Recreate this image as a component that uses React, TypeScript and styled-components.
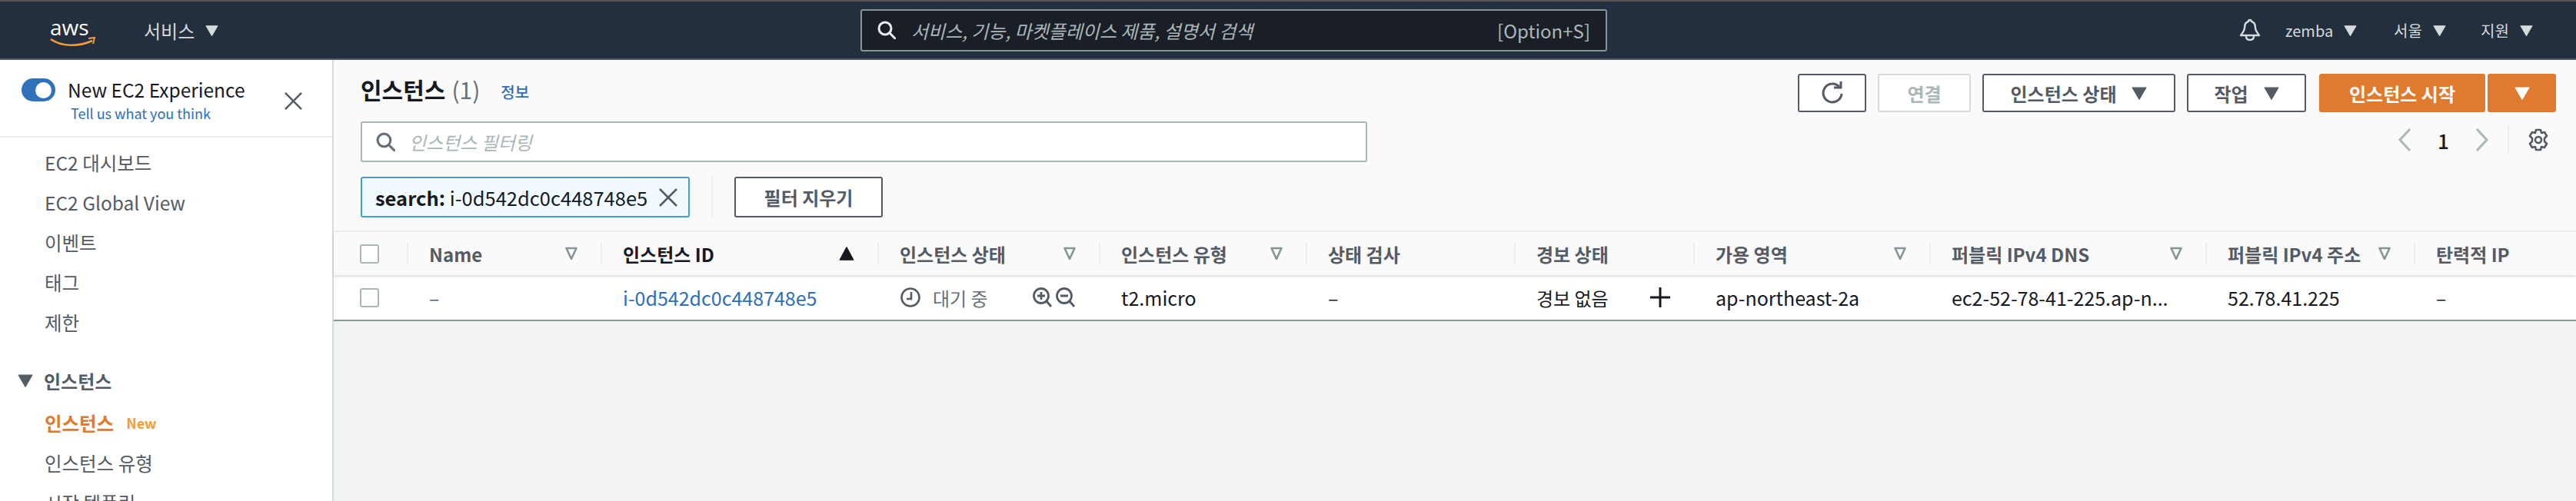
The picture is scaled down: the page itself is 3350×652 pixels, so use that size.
import styled, { createGlobalStyle } from "styled-components"

const GlobalStyle = createGlobalStyle`
    html, body {
        margin: 0;
        padding: 0;
        background: #f2f3f3;
    }
    * {
        box-sizing: border-box;
    }
    body {
        font-family: "Noto Sans CJK KR", "Noto Sans", sans-serif;
        color: #545b64;
    }
`;

const Triangle = ({ size = 17, color = "#d5dbdb", down = true }: { size?: number; color?: string; down?: boolean }) => (
    <svg width={size} height={size} viewBox="0 0 16 16" style={{ flex: "none" }}>
        <path d={down ? "M1 2.5h14L8 14.5z" : "M8 1.5l7 13H1z"} fill={color} stroke={color} strokeWidth="1" strokeLinejoin="round" />
    </svg>
);

const SortIcon = () => (
    <svg width="16" height="20" viewBox="0 0 16 20" style={{ flex: "none" }}>
        <path d="M1.5 3h13L8 17z" fill="none" stroke="#879596" strokeWidth="2.6" strokeLinejoin="round" />
    </svg>
);

const SearchIcon = ({ color, size }: { color: string; size: number }) => (
    <svg width={size} height={size} viewBox="0 0 24 24" style={{ flex: "none" }} fill="none" stroke={color} strokeWidth="3">
        <circle cx="10" cy="10" r="8" />
        <path d="M16 16l7 7" strokeLinecap="round" />
    </svg>
);

const CloseIcon = ({ size, color }: { size: number; color: string }) => (
    <svg width={size} height={size} viewBox="0 0 24 24" style={{ flex: "none" }} stroke={color} strokeWidth="2.6">
        <path d="M1 1l22 22M23 1L1 23" />
    </svg>
);

const cols = [
    { label: "Name", sort: true },
    { label: "인스턴스 ID", active: true },
    { label: "인스턴스 상태", sort: true },
    { label: "인스턴스 유형", sort: true },
    { label: "상태 검사" },
    { label: "경보 상태" },
    { label: "가용 영역", sort: true },
    { label: "퍼블릭 IPv4 DNS", sort: true },
    { label: "퍼블릭 IPv4 주소", sort: true },
    { label: "탄력적 IP" },
];

const gridCols = "95px 252px 360px 288px 269px 271px 233px 307px 359px 271px 211px";

export default function App() {
    return <Page>
        <GlobalStyle />
        <TopBar>
            <LeftNav>
                <Logo width="62" height="52" viewBox="0 -12 62 52">
                    <text x="0" y="20" fontFamily="'Open Sans', sans-serif" fontSize="28" fill="#fff">aws</text>
                    <path d="M1 25c14 10 36 10 54 2" fill="none" stroke="#f29d38" strokeWidth="2.6" />
                    <path d="M50 24l8-1-2 8" fill="none" stroke="#f29d38" strokeWidth="2" />
                </Logo>
                <NavItem $big>서비스</NavItem>
                <Triangle />
            </LeftNav>
            <GlobalSearch>
                <SearchIcon color="#eaeded" size={24} />
                <GlobalPlaceholder>서비스, 기능, 마켓플레이스 제품, 설명서 검색</GlobalPlaceholder>
                <Shortcut>[Option+S]</Shortcut>
            </GlobalSearch>
            <RightNav>
                <svg width="28" height="30" viewBox="0 0 28 30" fill="none" stroke="#d5dbdb" strokeWidth="2.4" style={{ marginRight: 32 }}>
                    <path d="M14 2c-1 0-2 1-2 2-4 1-5 4-5 8 0 4-3 7-5 10h24c-2-3-5-6-5-10 0-4-1-7-5-8 0-1-1-2-2-2z" strokeLinejoin="round" />
                    <path d="M9 23c0 3 2 5 5 5s5-2 5-5" />
                </svg>
                <NavGroup $w={141}><NavItem>zemba</NavItem><Triangle /></NavGroup>
                <NavGroup $w={113}><NavItem>서울</NavItem><Triangle /></NavGroup>
                <NavGroup $w={90}><NavItem>지원</NavItem><Triangle /></NavGroup>
            </RightNav>
        </TopBar>
        <Body>
            <Sidebar>
                <Experience>
                    <ExperienceText>
                        <ToggleRow>
                            <Toggle><Knob /></Toggle>
                            <ExperienceTitle>New EC2 Experience</ExperienceTitle>
                        </ToggleRow>
                        <Feedback>Tell us what you think</Feedback>
                    </ExperienceText>
                    <ExperienceClose><CloseIcon size={23} color="#545b64" /></ExperienceClose>
                </Experience>
                <NavList>
                    <SideItem>EC2 대시보드</SideItem>
                    <SideItem>EC2 Global View</SideItem>
                    <SideItem>이벤트</SideItem>
                    <SideItem>태그</SideItem>
                    <SideItem>제한</SideItem>
                    <SectionHead>
                        <Triangle size={20} color="#545b64" />
                        <span>인스턴스</span>
                    </SectionHead>
                    <SideItem $active>인스턴스<NewBadge>New</NewBadge></SideItem>
                    <SideItem>인스턴스 유형</SideItem>
                    <SideItem>시작 템플릿</SideItem>
                </NavList>
            </Sidebar>
            <Main>
                <Controls>
                    <FilterColumn>
                        <TitleRow>
                            <Title>인스턴스</Title>
                            <Count>(1)</Count>
                            <InfoLink>정보</InfoLink>
                        </TitleRow>
                        <FilterInput>
                            <SearchIcon color="#687078" size={25} />
                            <FilterPlaceholder>인스턴스 필터링</FilterPlaceholder>
                        </FilterInput>
                        <ChipRow>
                            <Chip>
                                <span><b>search:</b> i-0d542dc0c448748e5</span>
                                <CloseIcon size={24} color="#545b64" />
                            </Chip>
                            <ChipDivider />
                            <OutlineButton $w={193} $h={53}>필터 지우기</OutlineButton>
                        </ChipRow>
                    </FilterColumn>
                    <ActionColumn>
                        <ButtonRow>
                            <OutlineButton $w={89} $h={50}>
                                <svg width="30" height="32" viewBox="0 0 30 32" fill="none" stroke="#545b64" strokeWidth="3">
                                    <path d="M24 8a12 12 0 1 0 3 9" />
                                    <path d="M17 9h9V1" />
                                </svg>
                            </OutlineButton>
                            <DisabledButton>연결</DisabledButton>
                            <OutlineButton $w={251} $h={50} $gap={20}>인스턴스 상태<Triangle size={20} color="#545b64" /></OutlineButton>
                            <OutlineButton $w={155} $h={50} $gap={20}>작업<Triangle size={20} color="#545b64" /></OutlineButton>
                            <SplitButton>
                                <PrimaryButton $w={216}>인스턴스 시작</PrimaryButton>
                                <PrimaryButton $w={89}><Triangle size={20} color="#fff" /></PrimaryButton>
                            </SplitButton>
                        </ButtonRow>
                        <Pager>
                            <svg width="18" height="30" viewBox="0 0 18 30" fill="none" stroke="#aab7b8" strokeWidth="3"><path d="M16 1L3 15l13 14" /></svg>
                            <PageNumber>1</PageNumber>
                            <svg width="18" height="30" viewBox="0 0 18 30" fill="none" stroke="#aab7b8" strokeWidth="3"><path d="M2 1l13 14L2 29" /></svg>
                            <PagerDivider />
                            <svg width="28" height="30" viewBox="0 0 28 30" fill="none" stroke="#545b64" strokeWidth="2.6" strokeLinejoin="round">
                                <path d="M11 2h6l1 4 4-1 3 5-3 3v4l3 3-3 5-4-1-1 4h-6l-1-4-4 1-3-5 3-3v-4L3 10l3-5 4 1z" />
                                <circle cx="14" cy="15" r="4" />
                            </svg>
                        </Pager>
                    </ActionColumn>
                </Controls>
                <HeaderRow>
                    <CheckCell><Checkbox /></CheckCell>
                    {cols.map(col => (
                        <HeadCell key={col.label} $active={col.active}>
                            <span>{col.label}</span>
                            {col.sort && <SortIcon />}
                            {col.active && <Triangle size={20} color="#16191f" down={false} />}
                        </HeadCell>
                    ))}
                </HeaderRow>
                <DataRow>
                    <CheckCell><Checkbox /></CheckCell>
                    <Cell>–</Cell>
                    <Cell $link>i-0d542dc0c448748e5</Cell>
                    <StateCell>
                        <StateLabel>
                            <svg width="26" height="26" viewBox="0 0 26 26" fill="none" stroke="#545b64" strokeWidth="2.6">
                                <circle cx="13" cy="13" r="11.5" />
                                <path d="M14 6v9H8" />
                            </svg>
                            <span>대기 중</span>
                        </StateLabel>
                        <ZoomIcons>
                            <svg width="58" height="28" viewBox="0 0 58 28" fill="none" stroke="#545b64" strokeWidth="2.8">
                                <circle cx="12" cy="12" r="9.5" />
                                <path d="M19 19l6 7M7 12h10M12 7v10" />
                                <circle cx="42" cy="12" r="9.5" />
                                <path d="M49 19l6 7M37 12h10" />
                            </svg>
                        </ZoomIcons>
                    </StateCell>
                    <Cell $dark>t2.micro</Cell>
                    <Cell $dark>–</Cell>
                    <AlarmCell>
                        <span>경보 없음</span>
                        <svg width="26" height="26" viewBox="0 0 26 26" stroke="#16191f" strokeWidth="3"><path d="M13 0v26M0 13h26" /></svg>
                    </AlarmCell>
                    <Cell $dark>ap-northeast-2a</Cell>
                    <Cell $dark>ec2-52-78-41-225.ap-n...</Cell>
                    <Cell $dark>52.78.41.225</Cell>
                    <Cell $dark>–</Cell>
                </DataRow>
            </Main>
        </Body>
    </Page>
}

const Page = styled.div`
    width: 3350px;
    height: 652px;
    overflow: hidden;
    display: flex;
    flex-direction: column;
`;

const TopBar = styled.header`
    height: 78px;
    flex: none;
    display: flex;
    align-items: center;
    background: #232f3e;
    border-top: 2px solid #555;
    border-bottom: 2px solid #545b64;
    position: relative;
`;

const LeftNav = styled.div`
    width: 1119px;
    display: flex;
    align-items: center;
    padding-left: 65px;
`;

const Logo = styled.svg`
    margin-right: 60px;
    margin-top: 2px;
`;

const NavItem = styled.span<{ $big?: boolean }>`
    font-size: ${p => p.$big ? 24 : 20}px;
    color: #d5dbdb;
    white-space: nowrap;
    margin-right: ${p => p.$big ? 14 : 0}px;
`;

const GlobalSearch = styled.div`
    width: 971px;
    height: 55px;
    display: flex;
    align-items: center;
    padding: 0 20px;
    background: #1a1f27;
    border: 2px solid #879596;
    border-radius: 3px;
`;

const GlobalPlaceholder = styled.span`
    margin-left: 20px;
    font-size: 24px;
    font-style: italic;
    color: #aab7b8;
    flex: 1;
`;

const Shortcut = styled.span`
    font-size: 24px;
    color: #aab7b8;
`;

const RightNav = styled.div`
    margin-left: auto;
    width: 438px;
    display: flex;
    align-items: center;
`;

const NavGroup = styled.div<{ $w: number }>`
    width: ${p => p.$w}px;
    flex: none;
    display: flex;
    align-items: center;
    gap: 14px;
`;

const Body = styled.div`
    flex: 1;
    display: grid;
    grid-template-columns: 434px 1fr;
    min-height: 0;
`;

const Sidebar = styled.nav`
    background: #fff;
    border-right: 2px solid #d5dbdb;
    overflow: hidden;
`;

const Experience = styled.div`
    height: 101px;
    display: flex;
    justify-content: space-between;
    padding: 24px 39px 0 28px;
    border-bottom: 2px solid #eaeded;
`;

const ExperienceClose = styled.div`
    margin-top: 18px;
`;

const ExperienceText = styled.div`
    display: flex;
    flex-direction: column;
`;

const ToggleRow = styled.div`
    display: flex;
    align-items: center;
    gap: 16px;
    height: 30px;
`;

const Toggle = styled.div`
    width: 44px;
    height: 30px;
    border-radius: 15px;
    background: #2f72b9;
    display: flex;
    align-items: center;
    justify-content: flex-end;
    padding-right: 5px;
`;

const Knob = styled.div`
    width: 21px;
    height: 21px;
    border-radius: 50%;
    background: #fff;
`;

const ExperienceTitle = styled.span`
    font-size: 24.5px;
    line-height: 30px;
    color: #16191f;
`;

const Feedback = styled.a`
    margin: 1px 0 0 64px;
    font-size: 18px;
    line-height: 28px;
    color: #2e6fb8;
`;

const NavList = styled.div`
    padding-top: 6px;
    display: flex;
    flex-direction: column;
`;

const SideItem = styled.div<{ $active?: boolean }>`
    height: 52px;
    flex: none;
    display: flex;
    align-items: center;
    padding-left: 58px;
    font-size: 24.5px;
    font-weight: ${p => p.$active ? 700 : 400};
    color: ${p => p.$active ? "#df7a2f" : "#545b64"};
`;

const NewBadge = styled.span`
    margin-left: 16px;
    font-size: 18px;
    font-weight: 700;
    color: #f29d38;
`;

const SectionHead = styled.div`
    height: 52px;
    flex: none;
    margin: 24px 0 3px;
    display: flex;
    align-items: center;
    gap: 14px;
    padding-left: 23px;
    font-size: 24px;
    font-weight: 700;
    color: #545b64;
`;

const Main = styled.main`
    display: flex;
    flex-direction: column;
    min-width: 0;
`;

const Controls = styled.section`
    height: 224px;
    flex: none;
    display: flex;
    justify-content: space-between;
    padding: 0 26px 0 35px;
    background: #fafafa;
    border-bottom: 2px solid #eaeded;
`;

const FilterColumn = styled.div`
    width: 1309px;
    display: flex;
    flex-direction: column;
`;

const TitleRow = styled.div`
    height: 80px;
    display: flex;
    align-items: center;
    padding-bottom: 4px;
`;

const Title = styled.h1`
    margin: 0;
    font-size: 30px;
    font-weight: 700;
    color: #16191f;
`;

const Count = styled.span`
    margin-left: 8px;
    font-size: 30px;
    color: #687078;
`;

const InfoLink = styled.a`
    margin: 6px 0 0 27px;
    font-size: 20px;
    font-weight: 500;
    color: #2e6fb8;
`;

const FilterInput = styled.div`
    height: 53px;
    flex: none;
    display: flex;
    align-items: center;
    gap: 18px;
    padding-left: 18px;
    background: #fff;
    border: 2px solid #aab7b8;
    border-radius: 3px;
`;

const FilterPlaceholder = styled.span`
    font-size: 24px;
    font-style: italic;
    color: #aab7b8;
`;

const ChipRow = styled.div`
    margin-top: 19px;
    display: flex;
    align-items: center;
`;

const Chip = styled.div`
    width: 428px;
    height: 53px;
    display: flex;
    align-items: center;
    justify-content: space-between;
    padding: 0 14px 0 17px;
    font-size: 25.5px;
    color: #16191f;
    background: #f1faff;
    border: 2px solid #44a0cc;
    border-radius: 3px;
    white-space: nowrap;
`;

const ChipDivider = styled.div`
    width: 2px;
    height: 53px;
    margin: 0 28px;
    background: #eaeded;
`;

const OutlineButton = styled.button<{ $w: number; $h: number; $gap?: number }>`
    width: ${p => p.$w}px;
    height: ${p => p.$h}px;
    flex: none;
    display: flex;
    align-items: center;
    justify-content: center;
    gap: ${p => p.$gap ?? 0}px;
    padding: 0;
    font: 700 24px "Noto Sans CJK KR", sans-serif;
    color: #545b64;
    background: #fff;
    border: 2px solid #545b64;
    border-radius: 3px;
`;

const DisabledButton = styled.button`
    width: 121px;
    height: 50px;
    flex: none;
    padding: 0;
    font: 700 24px "Noto Sans CJK KR", sans-serif;
    color: #aab7b8;
    background: #fff;
    border: 2px solid #d5dbdb;
    border-radius: 3px;
`;

const ActionColumn = styled.div`
    display: flex;
    flex-direction: column;
    align-items: flex-end;
    padding-top: 18px;
`;

const ButtonRow = styled.div`
    display: flex;
    gap: 15px;
`;

const SplitButton = styled.div`
    display: flex;
    gap: 3px;
    margin-left: 2px;
`;

const PrimaryButton = styled.button<{ $w: number }>`
    width: ${p => p.$w}px;
    height: 50px;
    display: flex;
    align-items: center;
    justify-content: center;
    padding: 0;
    font: 700 24px "Noto Sans CJK KR", sans-serif;
    color: #fff;
    background: #df7a2f;
    border: 0;
    border-radius: 3px;
`;

const Pager = styled.div`
    margin-top: 17px;
    padding-right: 9px;
    height: 38px;
    display: flex;
    align-items: center;
`;

const PageNumber = styled.span`
    width: 83px;
    text-align: center;
    font-size: 26px;
    font-weight: 500;
    color: #16191f;
`;

const PagerDivider = styled.div`
    width: 2px;
    height: 38px;
    margin: 0 24px;
    background: #eaeded;
`;

const HeaderRow = styled.div`
    height: 56px;
    flex: none;
    display: grid;
    grid-template-columns: ${gridCols};
    align-items: center;
    background: #fafafa;
    box-shadow: 0 2px 3px rgba(0, 28, 36, 0.15);
    position: relative;
`;

const DataRow = styled.div`
    height: 60px;
    flex: none;
    display: grid;
    grid-template-columns: ${gridCols};
    align-items: center;
    background: #fff;
    border-bottom: 2px solid #879596;
`;

const CheckCell = styled.div`
    padding-left: 34px;
`;

const Checkbox = styled.div`
    width: 25px;
    height: 25px;
    background: #fff;
    border: 2px solid #aab7b8;
    border-radius: 3px;
`;

const HeadCell = styled.div<{ $active?: boolean }>`
    height: 28px;
    display: flex;
    align-items: center;
    justify-content: space-between;
    padding: 0 30px 0 27px;
    border-left: 2px solid #eaeded;
    font-size: 24px;
    font-weight: 700;
    white-space: nowrap;
    color: ${p => p.$active ? "#16191f" : "#545b64"};
`;

const Cell = styled.div<{ $link?: boolean; $dark?: boolean }>`
    padding-left: 29px;
    font-size: 25px;
    white-space: nowrap;
    color: ${p => p.$link ? "#2e6fb8" : p.$dark ? "#16191f" : "#545b64"};
`;

const StateCell = styled.div`
    display: flex;
    align-items: center;
    justify-content: space-between;
    padding: 0 29px 0 30px;
`;

const StateLabel = styled.div`
    display: flex;
    align-items: center;
    gap: 16px;
    font-size: 24px;
    color: #687078;
`;

const ZoomIcons = styled.div`
    display: flex;
    align-items: center;
`;

const AlarmCell = styled.div`
    display: flex;
    align-items: center;
    justify-content: space-between;
    padding: 0 30px 0 29px;
    font-size: 24px;
    color: #16191f;
`;
